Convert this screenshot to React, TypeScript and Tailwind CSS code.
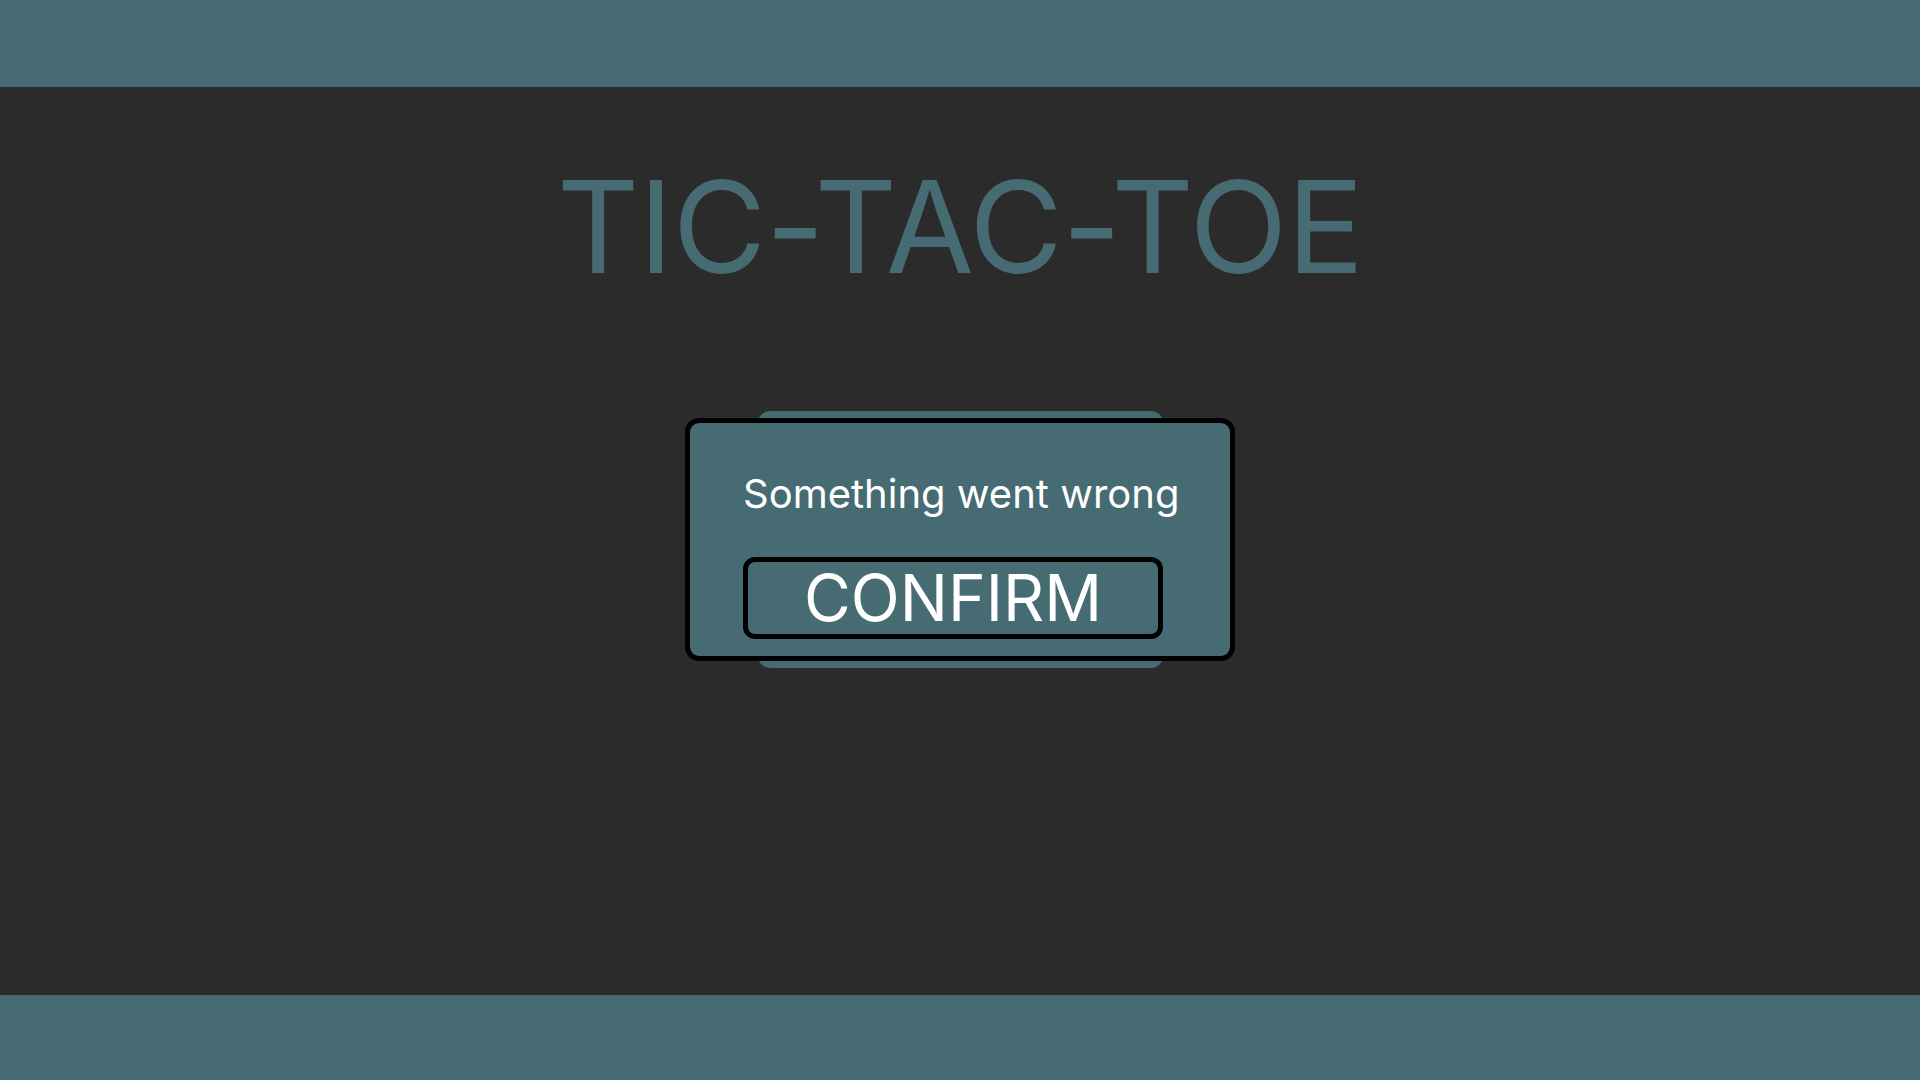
export default function App() {
  return (
    <div className="flex min-h-screen flex-col bg-[#2b2b2b] font-['Inter',sans-serif]">
      <header className="h-[87px] bg-[#466b73]" />

      <main className="flex flex-1 flex-col items-center">
        <h1 className="mt-[76px] text-[128px] font-normal leading-none tracking-[-0.5px] text-[#466b73]">
          TIC-TAC-TOE
        </h1>

        <div className="relative mt-[120px] py-[7px]">
          <div className="absolute inset-y-0 left-[73px] right-[72px] rounded-[12px] bg-[#466b73]" />
          <div className="relative flex h-[243px] w-[550px] flex-col items-start rounded-[14px] border-[5px] border-black bg-[#466b73] pl-[53px] pt-[51px]">
            <p className="text-[40px] leading-none text-white">Something went wrong</p>
            <button className="mt-[43px] flex h-[82px] w-[420px] items-center justify-center rounded-[12px] border-[5px] border-black text-[64px] leading-none text-white">
              CONFIRM
            </button>
          </div>
        </div>
      </main>

      <footer className="h-[85px] bg-[#466b73]" />
    </div>
  );
}
